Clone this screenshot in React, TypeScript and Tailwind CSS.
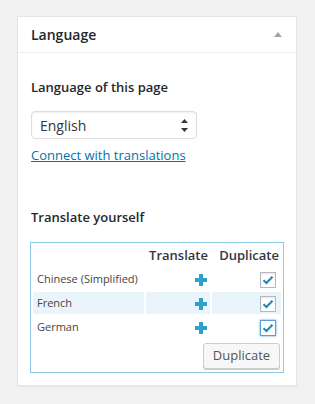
const languages = [
  { name: 'Chinese (Simplified)', shaded: false, focused: false },
  { name: 'French', shaded: true, focused: false },
  { name: 'German', shaded: false, focused: true },
];

function PlusIcon() {
  return (
    <svg width="12" height="12" viewBox="0 0 12 12" className="inline-block">
      <rect x="4" y="0" width="4" height="12" fill="#2ea2cc" />
      <rect x="0" y="4" width="12" height="4" fill="#2ea2cc" />
    </svg>
  );
}

function CheckBox({ focused }: { focused: boolean }) {
  return (
    <span
      className={
        'inline-flex h-4 w-4 items-center justify-center border bg-white ' +
        (focused ? 'border-[#5b9dd9] shadow-[0_0_2px_rgba(30,140,190,0.8)]' : 'border-[#b4b9be] shadow-[inset_0_1px_2px_rgba(0,0,0,0.1)]')
      }
    >
      <svg width="12" height="10" viewBox="0 0 12 10">
        <path d="M1.5 5.2 L4.5 8 L10.5 1.8" fill="none" stroke="#1e8cbe" strokeWidth="2.2" />
      </svg>
    </span>
  );
}

export default function App() {
  return (
    <div className="min-h-[404px] bg-[#f1f1f1] pt-4 pl-[17px] font-['Open_Sans',sans-serif] text-[#444]">
      <div className="w-[280px] border border-[#e5e5e5] bg-white shadow-[0_1px_1px_rgba(0,0,0,0.04)]">
        <div className="flex h-9 items-center justify-between border-b border-[#eee] pl-[13px] pr-[14px]">
          <h2 className="text-[14px] font-semibold text-[#23282d]">Language</h2>
          <svg width="8" height="5" viewBox="0 0 8 5">
            <path d="M0 5 L4 0 L8 5 Z" fill="#a0a5aa" />
          </svg>
        </div>
        <div className="px-[13px] pb-3 pt-[25px]">
          <p className="text-[13px] font-semibold leading-[18px] text-[#23282d]">Language of this page</p>
          <div className="mt-[15px] flex h-7 w-[166px] items-center justify-between rounded-[4px] border border-[#ddd] pl-2 pr-[8px] shadow-[inset_0_1px_2px_rgba(0,0,0,0.07)]">
            <span className="text-[14px] text-[#32373c]">English</span>
            <svg width="7" height="13" viewBox="0 0 7 13">
              <path d="M0 4 L3.5 0 L7 4 Z" fill="#32373c" />
              <path d="M0 9 L3.5 13 L7 9 Z" fill="#32373c" />
            </svg>
          </div>
          <a href="#" className="mt-[7px] block text-[13px] leading-[18px] text-[#0073aa] underline">
            Connect with translations
          </a>
          <p className="mt-[44px] text-[13px] font-semibold leading-[18px] text-[#23282d]">Translate yourself</p>
          <div className="ml-[-1px] mt-4 w-[254px] border border-[#8cc8e8] pb-[3px]">
            <table className="w-full table-fixed border-separate border-spacing-[2px] text-[11px]">
              <colgroup>
                <col className="w-[111px]" />
                <col className="w-[64px]" />
                <col />
              </colgroup>
              <thead>
                <tr className="h-[21px]">
                  <th></th>
                  <th className="whitespace-nowrap pr-[2px] text-right text-[13px] font-semibold text-[#32373c]">Translate</th>
                  <th className="whitespace-nowrap pr-[2px] text-right text-[13px] font-semibold text-[#32373c]">Duplicate</th>
                </tr>
              </thead>
              <tbody>
                {languages.map((lang) => (
                  <tr key={lang.name} className="h-[22px]">
                    <td className={'whitespace-nowrap pl-1 ' + (lang.shaded ? 'bg-[#eaf4fb]' : '')}>{lang.name}</td>
                    <td className={'pr-[3px] text-right ' + (lang.shaded ? 'bg-[#eaf4fb]' : '')}>
                      <PlusIcon />
                    </td>
                    <td className={'pr-[5px] text-right align-middle ' + (lang.shaded ? 'bg-[#eaf4fb]' : '')}>
                      <span className="inline-flex align-middle">
                        <CheckBox focused={lang.focused} />
                      </span>
                    </td>
                  </tr>
                ))}
              </tbody>
            </table>
            <div className="mt-[3px] flex justify-end pr-[3px]">
              <button className="h-[26px] w-[77px] rounded-[3px] border border-[#ccc] bg-[#f7f7f7] text-[13px] text-[#555] shadow-[0_1px_0_#ccc]">
                Duplicate
              </button>
            </div>
          </div>
        </div>
      </div>
    </div>
  );
}
